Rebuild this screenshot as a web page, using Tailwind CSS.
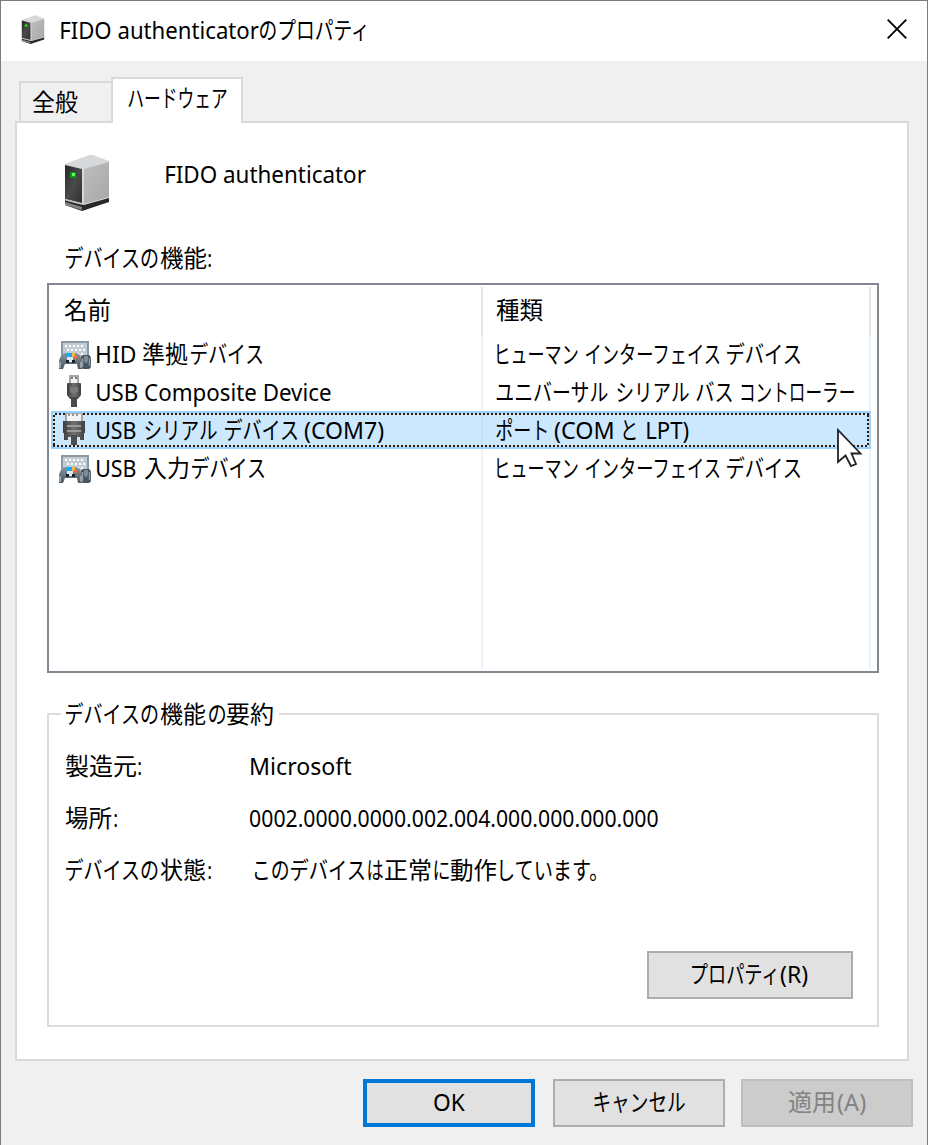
<!DOCTYPE html>
<html lang="ja">
<head>
<meta charset="utf-8">
<title>FIDO authenticatorのプロパティ</title>
<script src="https://cdn.jsdelivr.net/npm/@tailwindcss/browser@4"></script>
</head>
<body class="w-[928px] h-[1145px] overflow-hidden bg-[#f0f0f0] font-['Noto_Sans','Noto_Sans_CJK_JP',sans-serif] text-[24px] leading-[32px] text-black">
<svg width="0" height="0" class="absolute">
  <defs>
    <linearGradient id="front" x1="0" y1="0" x2="1" y2="1"><stop offset="0" stop-color="#262626"/><stop offset=".5" stop-color="#4a4a4a"/><stop offset="1" stop-color="#303030"/></linearGradient>
    <linearGradient id="side" x1="0" y1="0" x2="1" y2="1"><stop offset="0" stop-color="#bcbebf"/><stop offset="1" stop-color="#a5a7a9"/></linearGradient>
    <linearGradient id="pad" x1="0" y1="0" x2="0" y2="1"><stop offset="0" stop-color="#87949e"/><stop offset="1" stop-color="#4c5963"/></linearGradient>
    <linearGradient id="plug" x1="0" y1="0" x2="1" y2="0"><stop offset="0" stop-color="#3c3c3c"/><stop offset=".5" stop-color="#717171"/><stop offset="1" stop-color="#404040"/></linearGradient>
    <symbol id="tower" viewBox="0 0 46 57">
      <path d="M1 46 1 51 18 57 45 48 45 42 19 49z" fill="#27272a"/>
      <path d="M1 48 18 53 18 56 1 51z" fill="#858585"/>
      <path d="M1 10 25 1 29 1 45 7 45 44 20 51 1 46z" fill="#d7d8da"/>
      <path d="M20 15 45 8 45 43 20 50z" fill="url(#side)"/>
      <path d="M1 11 18 15 18 49 1 45z" fill="url(#front)"/>
      <path d="M2 46 18 50" stroke="#bdbdbd" stroke-width="1.5"/>
      <rect x="6" y="18" width="6" height="6" rx="1.5" fill="#0b9b14"/><rect x="8" y="19" width="3" height="3" fill="#5dff58"/>
    </symbol>
    <symbol id="hid" viewBox="0 0 32 28">
      <path d="M2 0h28v16H2z" fill="#8998a5"/><path d="M4 2h24v14H4z" fill="#c4ccd3"/>
      <path d="M6 5h20M8 9h18M6 13h20" stroke="#fff" stroke-width="2" stroke-dasharray="2 2"/>
      <path d="M22 16c0-1 1-2 3-2h4c2 0 3 2 3 4v6c0 3-1 4-3 4h-4c-2 0-3-1-3-4z" fill="#47535e"/><path d="M23.500 26V17M30.500 25V17" stroke="#8f9ca6" stroke-width="1.500"/><path d="M25 15h4v5l-2 3-2-3z" fill="#7c8a95"/>
      <path d="M0 28V20C1 15 4 12 7 12h9c4 0 6 3 7 8v8h-4l-1-5H6l-2 5z" fill="url(#pad)"/>
      <path d="M1 27V21M22 27V21" stroke="#a9b5bd" stroke-width="1.500"/>
      <path d="M7 12h6v5H8z" fill="#19a9f5"/><path d="M8 16h6v5H8z" fill="#d8eaf5"/>
      <path d="M13 12h3v4h-3z" fill="#f7b437"/><path d="M15 15h3v3h-3z" fill="#e76c4c"/>
      <path d="M7 19h3v3H7zM13 19h3v3h-3z" fill="#14232e"/>
    </symbol>
    <symbol id="usb" viewBox="0 0 14 32">
      <path d="M2 0h10v9H2z" fill="#a7a7a7"/><path d="M4 2h6v6H4z" fill="#f2f2f2"/><path d="M4 2h2v2H4zM8 2h2v2H8z" fill="#777"/>
      <path d="M0 9q0-1 1-1h12q1 0 1 1v11l-3 4H3L0 20z" fill="url(#plug)"/><path d="M4 22h6v10H4z" fill="#494949"/><path d="M3 12h8v5q-4 3-8 0z" fill="#797979"/>
    </symbol>
    <symbol id="com" viewBox="0 0 22 32">
      <path d="M2 0h18v10H2z" fill="#a5a5a5"/><path d="M4 1h14v7H4z" fill="#f4f4f4"/><path d="M6 0v3M10 0v3M14 0v3" stroke="#9a9a9a" stroke-width="2"/>
      <path d="M0 8h22v12h-1v7h-4v-3H5v3H1v-7H0z" fill="url(#plug)"/><path d="M4 13h14M4 18h14" stroke="#999" stroke-width="1.800"/><path d="M8 22h6v10H8z" fill="#4d4d4d"/>
    </symbol>
  </defs>
</svg>

<div class="relative flex flex-col w-[928px] h-[1145px] border-t border-l border-r border-[#7c7c7c]">
  <header class="flex items-start h-[60px] shrink-0 bg-white pl-[20px] pt-[13px]">
    <svg class="w-[24px] h-[29px] mt-[1px]"><use href="#tower"/></svg>
    <h1 class="flex ml-[16px]"><span data-fit class="w-[198px]">FIDO authenticator</span><span data-fit class="ml-[1px] w-[107px]">のプロパティ</span></h1>
    <svg class="ml-auto mr-[20px] mt-[5px] w-[20px] h-[20px]" viewBox="0 0 20 20"><path d="M.7.700 19.300 19.300M19.300.7.7 19.300" stroke="#000" stroke-width="1.900"/></svg>
  </header>

  <nav class="flex items-end h-[62px] shrink-0 pl-[18px] relative z-10">
    <div class="w-[92px] h-[40px] mb-[2px] border-t-2 border-l-2 border-[#d9d9d9] pl-[11px] pt-[3px]"><div class="flex"><span data-fit class="w-[46px]">全般</span></div></div>
    <div class="w-[132px] h-[46px] bg-white border-t-2 border-x-2 border-[#d9d9d9] pl-[15px] pt-[3px]"><div class="flex"><span data-fit class="w-[99px]">ハードウェア</span></div></div>
  </nav>

  <main class="mt-[-2px] ml-[14px] w-[894px] h-[940px] shrink-0 bg-white border-2 border-[#d9d9d9] px-[30px]">
    <div class="flex pt-[31px] pl-[17px] h-[119px]">
      <svg class="w-[46px] h-[57px]"><use href="#tower"/></svg>
      <div class="flex ml-[56px] mt-[4px]"><span data-fit class="w-[200px]">FIDO authenticator</span></div>
    </div>
    <div class="flex pl-[19px] h-[41px]"><span data-fit class="w-[92px]">デバイスの</span><span data-fit class="ml-[2px] w-[47px]">機能</span><span data-fit class="ml-[1px] w-[3px]">:</span></div>

    <div class="relative w-[832px] h-[390px] border-2 border-[#828790] pt-[2px] pl-[2px]">
      <div class="flex h-[48px] w-[820px] pt-[7px]">
        <div class="flex w-[430px] pl-[13px] shrink-0"><span data-fit class="w-[46px]">名前</span></div>
        <div class="flex pl-[15px]"><span data-fit class="w-[47px]">種類</span></div>
      </div>
      <div class="absolute left-[432px] top-[2px] w-[2px] h-[48px] bg-[#e5e5e5]"></div>
      <div class="absolute left-[820px] top-[2px] w-[2px] h-[48px] bg-[#e5e5e5]"></div>
      <div class="absolute left-[432px] top-[50px] w-[2px] h-[334px] bg-[#e9f3fc]"></div>
      <div class="absolute left-[820px] top-[50px] w-[2px] h-[334px] bg-[#e9f3fc]"></div>

      <div class="flex h-[38px] w-[820px] pt-[3px]">
        <div class="flex w-[430px] shrink-0 pl-[8px]"><svg class="w-[32px] h-[28px] mt-[3px]"><use href="#hid"/></svg>
          <span data-fit class="ml-[6px] w-[39px]">HID</span><span data-fit class="ml-[6px] w-[46px]">準拠</span><span data-fit class="ml-[3px] w-[72px]">デバイス</span></div>
        <div class="flex pl-[16px]"><span data-fit class="w-[81px]">ヒューマン</span><span data-fit class="ml-[8px] w-[135px]">インターフェイス</span><span data-fit class="ml-[6px] w-[74px]">デバイス</span></div>
      </div>
      <div class="flex h-[38px] w-[820px] pt-[3px]">
        <div class="flex w-[430px] shrink-0 pl-[16px]"><svg class="w-[14px] h-[32px] mt-[-1px]"><use href="#usb"/></svg>
          <span data-fit class="ml-[16px] w-[234px]">USB Composite Device</span></div>
        <div class="flex pl-[15px]"><span data-fit class="w-[112px]">ユニバーサル</span><span data-fit class="ml-[9px] w-[72px]">シリアル</span><span data-fit class="ml-[7px] w-[36px]">バス</span><span data-fit class="ml-[9px] w-[113px]">コントローラー</span></div>
      </div>
      <div class="relative flex h-[38px] w-[820px] pt-[3px] bg-[#cce8ff]">
        <svg class="absolute left-0 top-0 w-[820px] h-[38px]"><rect x="1" y="1" width="818" height="36" fill="none" stroke="#99d1ff" stroke-width="2"/><path d="M430 3h2v32h-2z" fill="#c0e2fc"/><path d="M4 3H818M2 35H818M3 4V34M817 4V34" fill="none" stroke="#331700" stroke-width="2" stroke-dasharray="2 2"/></svg>
        <div class="relative flex w-[430px] shrink-0 pl-[12px]"><svg class="w-[22px] h-[32px] mt-[-1px]"><use href="#com"/></svg>
          <span data-fit class="ml-[12px] w-[39px]">USB</span><span data-fit class="ml-[9px] w-[72px]">シリアル</span><span data-fit class="ml-[8px] w-[73px]">デバイス</span><span data-fit class="ml-[6px] w-[80px]">(COM7)</span></div>
        <div class="relative flex pl-[15px]"><span data-fit class="w-[51px]">ポート</span><span data-fit class="ml-[7px] w-[59px]">(COM</span><span data-fit class="ml-[10px] w-[13px]">と</span><span data-fit class="ml-[11px] w-[42px]">LPT)</span></div>
      </div>
      <div class="flex h-[38px] w-[820px] pt-[3px]">
        <div class="flex w-[430px] shrink-0 pl-[8px]"><svg class="w-[32px] h-[28px] mt-[3px]"><use href="#hid"/></svg>
          <span data-fit class="ml-[6px] w-[39px]">USB</span><span data-fit class="ml-[8px] w-[44px]">入力</span><span data-fit class="ml-[4px] w-[73px]">デバイス</span></div>
        <div class="flex pl-[16px]"><span data-fit class="w-[81px]">ヒューマン</span><span data-fit class="ml-[8px] w-[135px]">インターフェイス</span><span data-fit class="ml-[6px] w-[74px]">デバイス</span></div>
      </div>
      <!-- mouse pointer -->
      <svg class="absolute left-[788px] top-[143px] w-[26px] h-[42px]" viewBox="0 0 26 42"><path d="M1 2V34L8.500 27.500 14 38 19 36 14.500 25.500H23.500z" fill="#fff" stroke="#202028" stroke-width="1.800"/></svg>
    </div>

    <fieldset class="mt-[25px] w-[832px] h-[329px] border-2 border-[#dcdcdc] pl-[16px] pr-[24px] relative">
      <legend class="flex h-[32px] ml-[-4px] pl-[5px] w-[218px] leading-[32px]"><span data-fit class="w-[92px]">デバイスの</span><span data-fit class="ml-[2px] w-[46px]">機能</span><span data-fit class="ml-[3px] w-[16px]">の</span><span data-fit class="ml-[2px] w-[46px]">要約</span></legend>
      <div class="grid grid-cols-[184px_1fr] auto-rows-[52px] pt-[20px]">
        <div class="flex"><span data-fit class="w-[71px]">製造元</span><span data-fit class="ml-[2px] w-[3px]">:</span></div>
        <div class="flex pl-[2px]"><span data-fit class="w-[101px]">Microsoft</span></div>
        <div class="flex"><span data-fit class="w-[47px]">場所</span><span data-fit class="ml-[2px] w-[3px]">:</span></div>
        <div class="flex pl-[1px]"><span data-fit class="w-[408px]">0002.0000.0000.002.004.000.000.000.000</span></div>
        <div class="flex pl-[1px]"><span data-fit class="w-[92px]">デバイスの</span><span data-fit class="ml-[2px] w-[46px]">状態</span><span data-fit class="ml-[2px] w-[3px]">:</span></div>
        <div class="flex pl-[6px]"><span data-fit class="w-[33px]">この</span><span data-fit class="ml-[3px] w-[74px]">デバイス</span><span data-fit class="ml-[3px] w-[15px]">は</span><span data-fit class="ml-[2px] w-[46px]">正常</span><span data-fit class="ml-[3px] w-[15px]">に</span><span data-fit class="ml-[2px] w-[46px]">動作</span><span data-fit class="ml-[3px] w-[97px]">しています。</span></div>
      </div>
      <button class="absolute left-[598px] top-[221px] w-[206px] h-[48px] border-2 border-[#adadad] bg-[#e1e1e1] flex pl-[43px] pt-[5px]"><span data-fit class="w-[85px]">プロパティ</span><span data-fit class="ml-[3px] w-[28px]">(R)</span></button>
    </fieldset>
  </main>

  <footer class="flex justify-end pt-[18px] pr-[14px]">
    <button class="w-[172px] h-[48px] border-4 border-[#0078d7] bg-[#e1e1e1] flex pl-[67px] pt-[3px]"><span data-fit class="w-[31px]">OK</span></button>
    <button class="ml-[18px] w-[172px] h-[48px] border-2 border-[#adadad] bg-[#e1e1e1] flex pl-[39px] pt-[5px]"><span data-fit class="w-[91px]">キャンセル</span></button>
    <button disabled class="ml-[16px] w-[172px] h-[48px] border-2 border-[#bfbfbf] bg-[#cccccc] text-[#838383] flex pl-[45px] pt-[5px]"><span data-fit class="w-[46px]">適用</span><span data-fit class="ml-[3px] w-[29px]">(A)</span></button>
  </footer>
</div>

<script>
// Condense each run of text so that its glyphs fill the width of its box.
const ctx = document.createElement('canvas').getContext('2d');
function fit(el) {
  const cs = getComputedStyle(el);
  ctx.font = cs.fontWeight + ' ' + cs.fontSize + ' ' + cs.fontFamily;
  const m = ctx.measureText(el.textContent);
  const left = -m.actualBoundingBoxLeft, ink = m.actualBoundingBoxRight - left;
  const s = el.offsetWidth / ink;
  el.style.whiteSpace = 'pre';
  el.style.flexShrink = '0';
  el.style.transformOrigin = '0 0';
  el.style.transform = `translateX(${-left * s}px) scaleX(${s})`;
}
const fitAll = () => document.querySelectorAll('[data-fit]').forEach(fit);
const observer = new ResizeObserver(entries => entries.forEach(e => fit(e.target)));
document.querySelectorAll('[data-fit]').forEach(el => observer.observe(el));
addEventListener('load', fitAll);
</script>
</body>
</html>
